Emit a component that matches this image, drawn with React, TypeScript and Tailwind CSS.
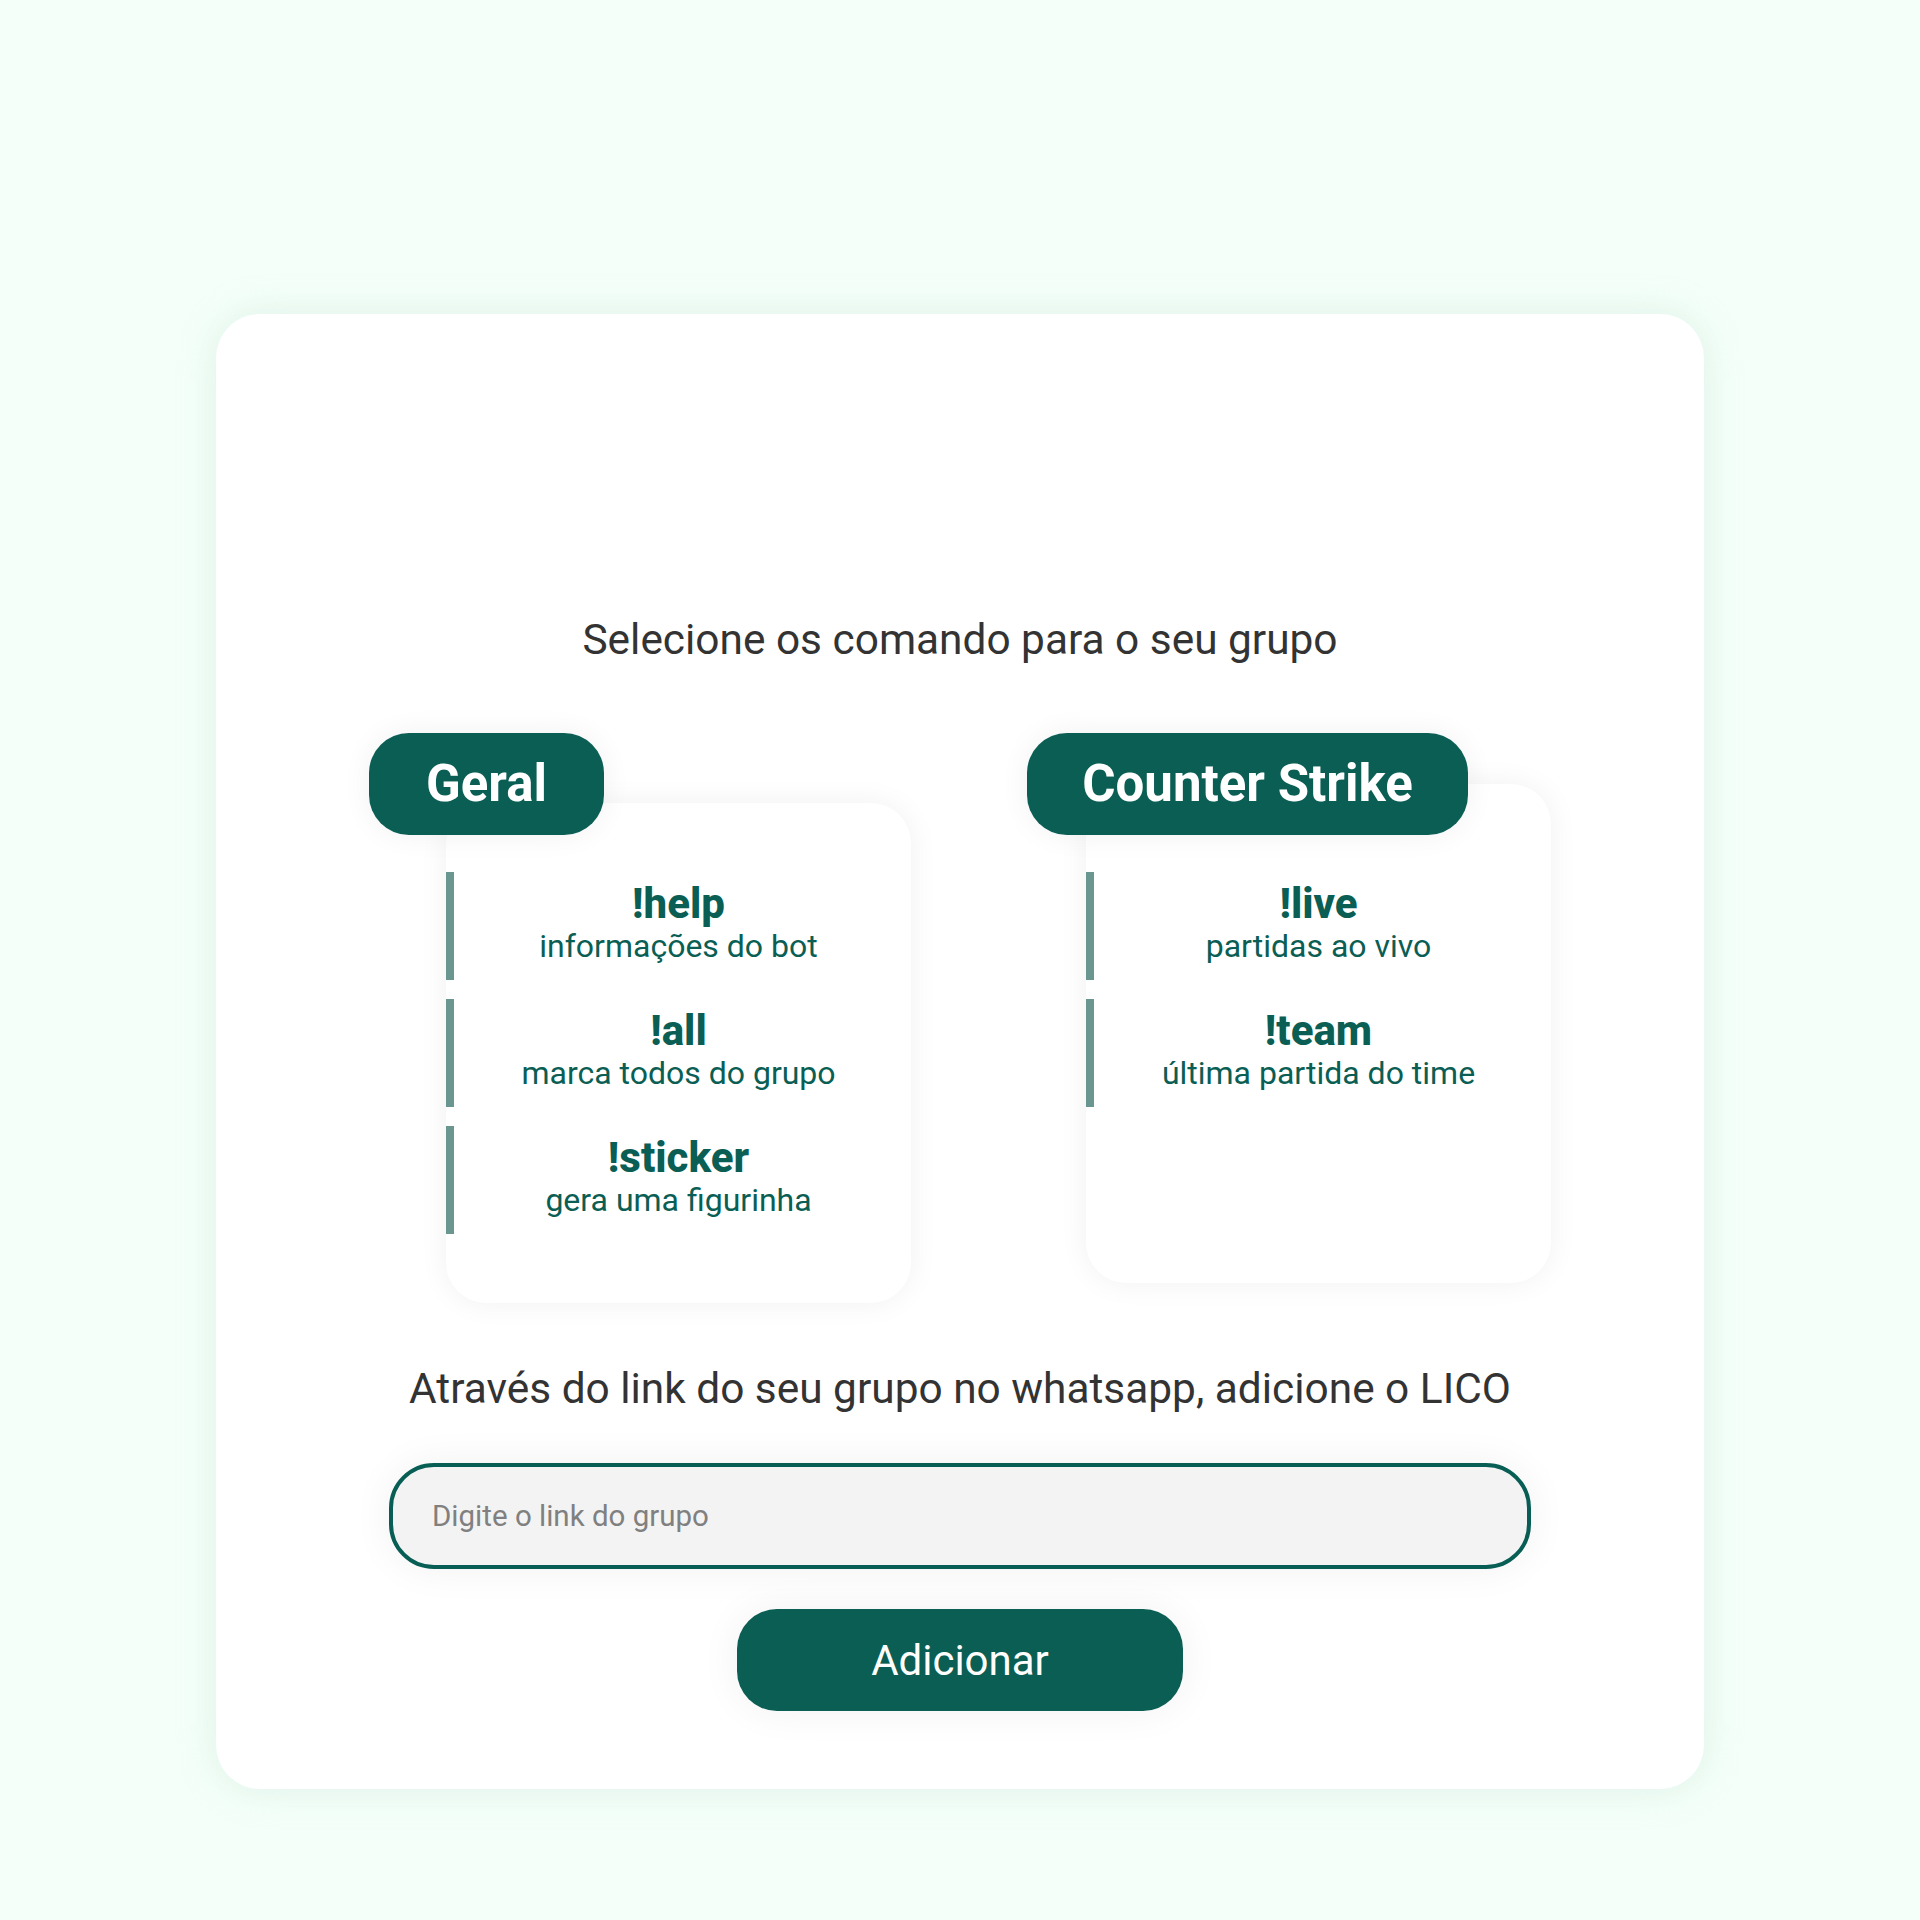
import React from "react";

type Cmd = { name: string; desc: string };

const geral: Cmd[] = [
  { name: "!help", desc: "informações do bot" },
  { name: "!all", desc: "marca todos do grupo" },
  { name: "!sticker", desc: "gera uma figurinha" },
];

const cs: Cmd[] = [
  { name: "!live", desc: "partidas ao vivo" },
  { name: "!team", desc: "última partida do time" },
];

function Item({ c }: { c: Cmd }) {
  return (
    <div className="flex h-[108px] flex-col items-center border-l-[8px] border-[#6a9690] pr-[8px] pt-[10px] text-[#0a5e54]">
      <div className="text-[42px] font-extrabold leading-[44px]">{c.name}</div>
      <div className="text-[32px] leading-[40px]">{c.desc}</div>
    </div>
  );
}

export default function App() {
  return (
    <div
      className="min-h-[1920px] w-full bg-[#f5fffa] pt-[314px]"
      style={{ fontFamily: "Roboto, 'Noto Sans', sans-serif" }}
    >
      <div className="mx-auto flex h-[1475px] w-[1488px] flex-col items-center rounded-[44px] bg-white px-[153px] pt-[301px] shadow-[0_0_40px_rgba(190,225,205,0.45)]">
        <h1 className="text-[42.4px] leading-[50px] text-[#333333]">
          Selecione os comando para o seu grupo
        </h1>

        <div className="mt-[68px] flex w-full items-start justify-between">
          <div className="flex w-[542px] flex-col">
            <div className="relative z-10 flex h-[102px] w-[235px] items-center justify-center rounded-[40px] bg-[#0a5e54] text-[51px] font-bold text-white shadow-[0_0_30px_rgba(0,0,0,0.06)]">
              Geral
            </div>
            <div className="-mt-[32px] ml-[77px] flex h-[500px] w-[465px] flex-col gap-[19px] rounded-[40px] bg-white pt-[69px] shadow-[0_0_30px_rgba(0,0,0,0.06)]">
              {geral.map((c) => (
                <Item key={c.name} c={c} />
              ))}
            </div>
          </div>

          <div className="flex w-[524px] flex-col">
            <div className="relative z-10 flex h-[102px] w-[441px] items-center justify-center rounded-[40px] bg-[#0a5e54] text-[51px] font-bold text-white shadow-[0_0_30px_rgba(0,0,0,0.06)]">
              Counter Strike
            </div>
            <div className="-mt-[51px] ml-[59px] flex h-[499px] w-[465px] flex-col gap-[19px] rounded-[40px] bg-white pt-[88px] shadow-[0_0_30px_rgba(0,0,0,0.06)]">
              {cs.map((c) => (
                <Item key={c.name} c={c} />
              ))}
            </div>
          </div>
        </div>

        <p className="mt-[61px] text-[42.4px] leading-[50px] text-[#333333]">
          Através do link do seu grupo no whatsapp, adicione o LICO
        </p>

        <input
          type="text"
          placeholder="Digite o link do grupo"
          className="mt-[49px] h-[106px] w-[1142px] rounded-[45px] border-[4px] border-[#085e54] bg-[#f3f3f3] px-[39px] text-[29.5px] text-[#333] shadow-[0_0_40px_rgba(0,0,0,0.06)] outline-none placeholder:text-[#808080]"
        />

        <button className="mt-[40px] h-[102px] w-[446px] rounded-[40px] bg-[#0a5e54] text-[42px] text-white shadow-[0_0_40px_rgba(0,0,0,0.06)]">
          Adicionar
        </button>
      </div>
    </div>
  );
}
